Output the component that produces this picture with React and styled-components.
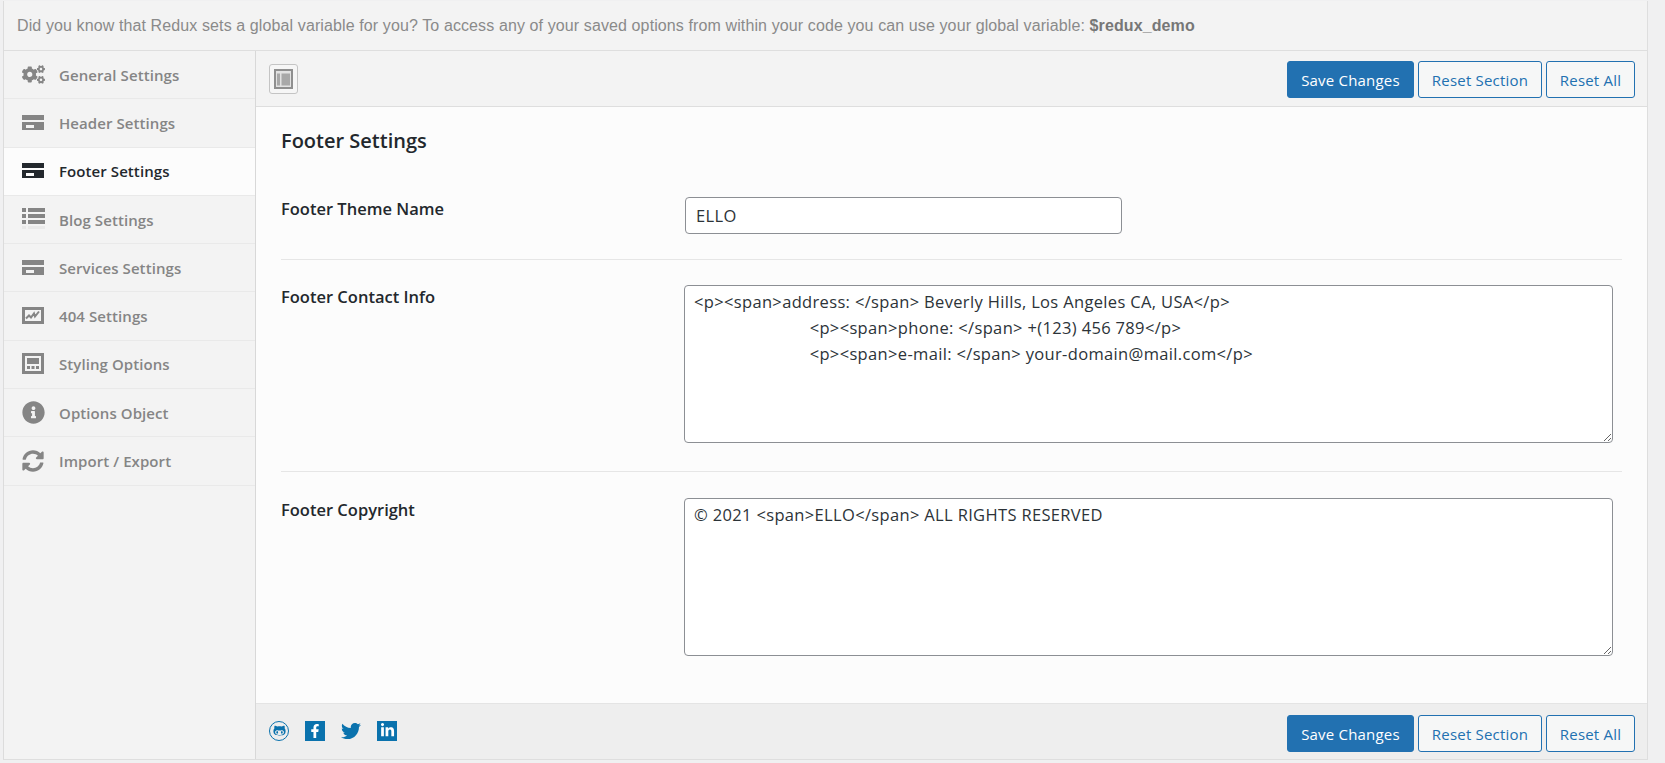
import React from "react";
import styled, { createGlobalStyle } from "styled-components";
import { FaCogs, FaInfoCircle, FaSyncAlt, FaTwitter, FaFacebookF, FaLinkedinIn, FaGithubAlt } from "react-icons/fa";

const GlobalStyle = createGlobalStyle`
  html, body {
    margin: 0;
    padding: 0;
    background: #f0f0f1;
    overflow: hidden;
  }
`;

const Panel = styled.div`
  margin: 1px 17px 3px 3px;
  height: 759px;
  display: flex;
  flex-direction: column;
  border-left: 1px solid #dcdcdc;
  border-right: 1px solid #dedede;
  border-bottom: 1px solid #dedede;
  box-sizing: border-box;
  font-family: "Open Sans", "Noto Sans", sans-serif;
`;

const Notice = styled.div`
  height: 50px;
  flex: none;
  box-sizing: border-box;
  display: flex;
  align-items: center;
  padding: 0 0 0 13px;
  background: #f3f3f3;
  border-bottom: 1px solid #dedede;
  font-family: "Liberation Sans", Arial, sans-serif;
  font-size: 16px;
  letter-spacing: 0.11px;
  color: #8a8a8a;
  white-space: pre;
  b { color: #777; }
`;

const Body = styled.div`
  flex: 1;
  display: flex;
  min-height: 0;
`;

const Sidebar = styled.nav`
  width: 252px;
  flex: none;
  box-sizing: border-box;
  background: #f3f3f3;
  border-right: 1px solid #d8d8d8;
`;

const NavItem = styled.div`
  height: 48.3px;
  box-sizing: border-box;
  display: flex;
  align-items: center;
  padding-left: 17px;
  gap: 14px;
  border-bottom: 1px solid #e9e9e9;
  background: ${(p) => (p.$active ? "#fcfcfc" : "transparent")};
  color: ${(p) => (p.$active ? "#23282d" : "#858585")};
  font-size: 15px;
  font-weight: 600;
  letter-spacing: 0.08px;
`;

const NavIcon = styled.span`
  width: 24px;
  height: 24px;
  margin-bottom: 1px;
  display: flex;
  align-items: center;
  justify-content: center;
  flex: none;
`;

const Main = styled.div`
  flex: 1;
  min-width: 0;
  display: flex;
  flex-direction: column;
`;

const Bar = styled.div`
  flex: none;
  height: 56px;
  box-sizing: border-box;
  display: flex;
  align-items: center;
  justify-content: space-between;
  padding: ${(p) => (p.$bottom ? "4px" : "2px")} 12px 0 13px;
  background: ${(p) => (p.$bottom ? "#eeeeee" : "#f3f3f3")};
  border-bottom: ${(p) => (p.$bottom ? "none" : "1px solid #dedede")};
  border-top: ${(p) => (p.$bottom ? "1px solid #e4e4e4" : "none")};
`;

const ToggleButton = styled.button`
  width: 29px;
  height: 30px;
  padding: 0;
  margin-bottom: 2px;
  display: flex;
  align-items: center;
  justify-content: center;
  background: #f6f6f6;
  border: 1px solid #c4c4c4;
  border-radius: 3px;
`;

const Actions = styled.div`
  display: flex;
  gap: 4px;
`;

const Button = styled.button`
  height: 37px;
  width: ${(p) => p.$w}px;
  padding: 0;
  box-sizing: border-box;
  font-family: "Open Sans", "Noto Sans", sans-serif;
  font-size: 15px;
  letter-spacing: 0.2px;
  border-radius: 3px;
  border: 1px solid #2271b1;
  color: ${(p) => (p.$primary ? "#fff" : "#2271b1")};
  background: ${(p) => (p.$primary ? "#2271b1" : "#f6f7f7")};
`;

const Content = styled.div`
  flex: 1;
  min-height: 0;
  background: #fcfcfc;
  padding: 20px 25px 0;
`;

const Heading = styled.h2`
  margin: 0 0 42px;
  font-size: 20px;
  line-height: 28px;
  font-weight: 600;
  color: #23282d;
`;

const Row = styled.div`
  display: flex;
  padding-bottom: ${(p) => p.$pb}px;
  margin-bottom: ${(p) => p.$mb}px;
  border-bottom: ${(p) => (p.$last ? "none" : "1px solid #e6e6e6")};
`;

const Label = styled.div`
  width: 403px;
  flex: none;
  font-size: 16.5px;
  line-height: 24px;
  font-weight: 600;
  color: #23282d;
`;

const TextInput = styled.input`
  width: 437px;
  height: 37px;
  margin-left: 1px;
  box-sizing: border-box;
  padding: 0 10px;
  border: 1px solid #8c8f94;
  border-radius: 4px;
  background: #fff;
  color: #2c3338;
  font-family: "Open Sans", "Noto Sans", sans-serif;
  font-size: 16.5px;
  letter-spacing: 0.34px;
  outline: none;
`;

const TextArea = styled.textarea`
  width: 929px;
  height: 158px;
  display: block;
  box-sizing: border-box;
  padding: 3px 9px;
  border: 1px solid #8c8f94;
  border-radius: 4px;
  background: #fff;
  color: #2c3338;
  font-family: "Open Sans", "Noto Sans", sans-serif;
  font-size: 16.5px;
  line-height: 26px;
  letter-spacing: 0.34px;
  outline: none;
`;

const Socials = styled.div`
  display: flex;
  align-items: center;
  gap: 16px;
  margin-bottom: 6px;
  color: #0a72ad;
`;

const Square = styled.span`
  width: 20px;
  height: 20px;
  display: flex;
  align-items: center;
  justify-content: center;
  background: #0a72ad;
  color: #fff;
`;

const GitHubRing = styled.span`
  width: 20px;
  height: 20px;
  box-sizing: border-box;
  display: flex;
  align-items: center;
  justify-content: center;
  border: 1.5px solid #0a72ad;
  border-radius: 50%;
`;

const HeaderIcon = () => (
  <svg width="22" height="15" viewBox="0 0 22 15" fill="currentColor">
    <path fillRule="evenodd" d="M0 0h22v5H0zM0 7h22v8H0zM4 10v3h8v-3z" />
  </svg>
);

const ListIcon = () => (
  <svg width="23" height="22" viewBox="0 0 23 22" fill="currentColor">
    <path d="M0 0h4v4H0zM6 0h17v4H6zM0 6h4v4H0zM6 6h17v4H6zM0 12h4v4H0zM6 12h17v4H6z" />
    <path d="M0 18h4v3H0zM6 18h17v3H6z" fill="#e9e9e9" />
  </svg>
);

const ChartIcon = () => (
  <svg width="22" height="17" viewBox="0 0 22 17" fill="currentColor">
    <path fillRule="evenodd" d="M0 0h22v17H0zM3 3v11h16V3z" />
    <path d="M4 11.5l3-3 2 2 3-4 1 3 4-5" fill="none" stroke="currentColor" strokeWidth="2" />
  </svg>
);

const LayoutIcon = () => (
  <svg width="22" height="21" viewBox="0 0 22 21" fill="currentColor">
    <path fillRule="evenodd" d="M0 0h22v21H0zM3 3v15h16V3z" />
    <path d="M5 5h12v6H5zM5 13h3v3H5zM9.5 13h3v3h-3zM14 13h3v3h-3z" />
  </svg>
);

const TemplateIcon = () => (
  <svg width="19" height="20" viewBox="0 0 19 20">
    <path d="M0 0h19v20H0z" fill="#8f8f8f" />
    <path d="M2 2h15v16H2z" fill="#e2e2e2" />
    <path d="M3 4.5h3v12H3zM7.5 4.5H16v12H7.5z" fill="#a8a8a8" />
  </svg>
);

const navItems = [
  { label: "General Settings", icon: <FaCogs size={23} /> },
  { label: "Header Settings", icon: <HeaderIcon /> },
  { label: "Footer Settings", icon: <HeaderIcon />, active: true },
  { label: "Blog Settings", icon: <ListIcon /> },
  { label: "Services Settings", icon: <HeaderIcon /> },
  { label: "404 Settings", icon: <ChartIcon /> },
  { label: "Styling Options", icon: <LayoutIcon /> },
  { label: "Options Object", icon: <FaInfoCircle size={23} /> },
  { label: "Import / Export", icon: <FaSyncAlt size={22} /> },
];

const indent = " ".repeat(25);
const contactInfo = `<p><span>address: </span> Beverly Hills, Los Angeles CA, USA</p>
${indent}<p><span>phone: </span> +(123) 456 789</p>
${indent}<p><span>e-mail: </span> your-domain@mail.com</p>`;

const ButtonGroup = () => (
  <Actions>
    <Button $primary $w={127}>Save Changes</Button>
    <Button $w={124}>Reset Section</Button>
    <Button $w={89}>Reset All</Button>
  </Actions>
);

const App = () => {
  return (
    <>
      <GlobalStyle />
      <Panel>
        <Notice>
          Did you know that Redux sets a global variable for you? To access any of your saved options from within your code you can use your global variable: <b>$redux_demo</b>
        </Notice>
        <Body>
          <Sidebar>
            {navItems.map((item) => (
              <NavItem key={item.label} $active={item.active}>
                <NavIcon>{item.icon}</NavIcon>
                {item.label}
              </NavItem>
            ))}
          </Sidebar>
          <Main>
            <Bar>
              <ToggleButton aria-label="Expand">
                <TemplateIcon />
              </ToggleButton>
              <ButtonGroup />
            </Bar>
            <Content>
              <Heading>Footer Settings</Heading>
              <Row $pb={25} $mb={25}>
                <Label>Footer Theme Name</Label>
                <TextInput defaultValue="ELLO" />
              </Row>
              <Row $pb={28} $mb={26}>
                <Label>Footer Contact Info</Label>
                <TextArea defaultValue={contactInfo} />
              </Row>
              <Row $last $pb={0} $mb={0}>
                <Label>Footer Copyright</Label>
                <TextArea defaultValue="© 2021 <span>ELLO</span> ALL RIGHTS RESERVED" />
              </Row>
            </Content>
            <Bar $bottom>
              <Socials>
                <GitHubRing><FaGithubAlt size={13} /></GitHubRing>
                <Square><FaFacebookF size={14} /></Square>
                <FaTwitter size={20} />
                <Square><FaLinkedinIn size={15} /></Square>
              </Socials>
              <ButtonGroup />
            </Bar>
          </Main>
        </Body>
      </Panel>
    </>
  );
};

export default App;
